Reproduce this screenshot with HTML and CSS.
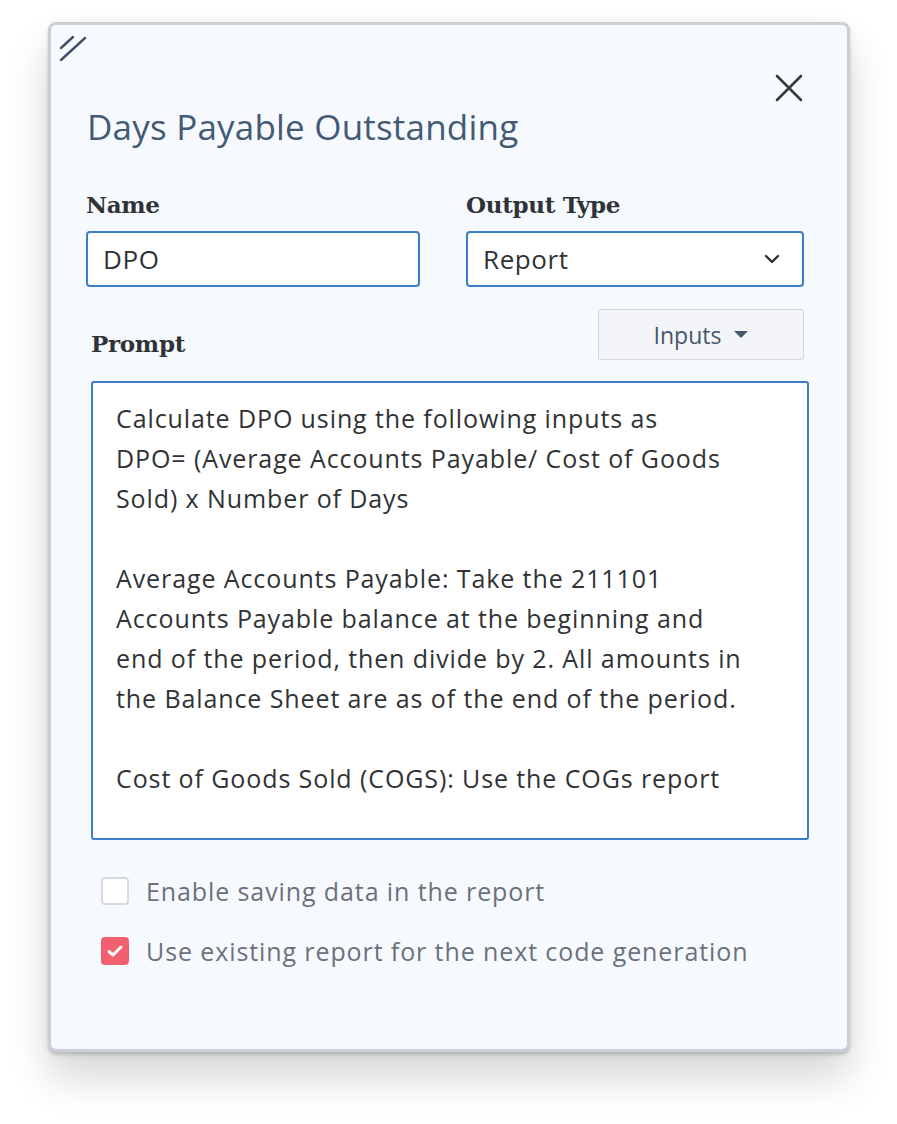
FILE: index.html
```html
<!DOCTYPE html>
<html lang="en">
<head>
    <meta charset="UTF-8">
    <meta name="viewport" content="width=device-width, initial-scale=1.0">
    <title>Days Payable Outstanding</title>
    <link rel="stylesheet" href="styles.css">
</head>
<body>
    <main class="modal">
        <svg class="resize-grip" width="28" height="26" viewBox="0 0 28 26">
            <path d="M2 13 L14 2 M2 25 L26 3" stroke="#3f5068" stroke-width="2.4" stroke-linecap="round" fill="none"/>
        </svg>
        <button class="close-btn" aria-label="Close">
            <svg width="28" height="28" viewBox="0 0 28 28">
                <path d="M2 2 L26 26 M26 2 L2 26" stroke="#333a40" stroke-width="2.6" stroke-linecap="round" fill="none"/>
            </svg>
        </button>

        <h1 class="title">Days Payable Outstanding</h1>

        <div class="field-row">
            <div class="field">
                <label class="field-label" for="name-input">Name</label>
                <div class="text-box" id="name-input">DPO</div>
            </div>
            <div class="field">
                <label class="field-label" for="output-select">Output Type</label>
                <div class="text-box select-box" id="output-select">
                    <span>Report</span>
                    <svg width="16" height="10" viewBox="0 0 16 10">
                        <path d="M2 2 L8 8 L14 2" stroke="#2b2f33" stroke-width="2.4" stroke-linecap="round" stroke-linejoin="round" fill="none"/>
                    </svg>
                </div>
            </div>
        </div>

        <section class="prompt">
            <div class="prompt-head">
                <label class="field-label">Prompt</label>
                <button class="inputs-btn">Inputs <span class="caret"></span></button>
            </div>
            <div class="prompt-box">
                <p>Calculate DPO using the following inputs as<br>DPO= (Average Accounts Payable/ Cost of Goods<br>Sold) x Number of Days</p>
                <p>Average Accounts Payable: Take the 211101<br>Accounts Payable balance at the beginning and<br>end of the period, then divide by 2. All amounts in<br>the Balance Sheet are as of the end of the period.</p>
                <p>Cost of Goods Sold (COGS): Use the COGs report</p>
            </div>
        </section>

        <div class="options">
            <label class="option">
                <span class="check"></span>
                Enable saving data in the report
            </label>
            <label class="option">
                <span class="check checked">
                    <svg width="18" height="14" viewBox="0 0 18 14">
                        <path d="M3 7.5 L7 11 L15 3" stroke="#ffffff" stroke-width="3" stroke-linecap="round" stroke-linejoin="round" fill="none"/>
                    </svg>
                </span>
                Use existing report for the next code generation
            </label>
        </div>
    </main>
</body>
</html>
```

FILE: styles.css
```css
body {
    margin: 0;
    padding: 22px 0 80px 48px;
    background-color: #ffffff;
    font-family: "Open Sans", Lato, sans-serif;
    color: #2f3337;
}

.modal {
    position: relative;
    box-sizing: border-box;
    width: 802px;
    height: 1030px;
    padding: 78px 43px 0 35px;
    background-color: #f6faff;
    border: 3px solid #c9cfd4;
    border-radius: 8px;
    box-shadow: 0 26px 40px rgba(0, 0, 0, 0.16), 0 3px 3px rgba(0, 0, 0, 0.14), 0 0 12px rgba(0, 0, 0, 0.05);
}

.resize-grip {
    position: absolute;
    top: 10px;
    left: 8px;
}

.close-btn {
    position: absolute;
    top: 49px;
    right: 44px;
    padding: 0;
    border: none;
    background: none;
    cursor: pointer;
}

.title {
    margin: 0 0 0 1px;
    font-size: 35px;
    font-weight: 400;
    line-height: 48px;
    letter-spacing: 0.2px;
    color: #445a74;
}

.field-row {
    display: grid;
    grid-template-columns: 334px 338px;
    column-gap: 46px;
    margin-top: 40px;
}

.field-label {
    display: block;
    font-family: "DejaVu Serif", serif;
    font-weight: bold;
    font-size: 23px;
    line-height: 28px;
    color: #2f3337;
    letter-spacing: -0.3px;
}

.field {
    display: flex;
    flex-direction: column;
    gap: 12px;
}

.text-box {
    box-sizing: border-box;
    height: 56px;
    display: flex;
    align-items: center;
    padding: 0 15px;
    background-color: #ffffff;
    border: 2px solid #3b7dc9;
    border-radius: 4px;
    font-size: 26px;
    letter-spacing: 0.6px;
    color: #2f3337;
}

.select-box {
    justify-content: space-between;
    padding-right: 22px;
}

.prompt {
    margin: 22px -5px 0 5px;
}

.prompt-head {
    display: flex;
    justify-content: space-between;
    align-items: center;
    padding-right: 5px;
}

.prompt-head .field-label {
    margin-top: 18px;
}

.inputs-btn {
    box-sizing: border-box;
    width: 206px;
    height: 51px;
    display: flex;
    justify-content: center;
    align-items: center;
    gap: 13px;
    background-color: #f4f5f8;
    border: 1.5px solid #d3d6dc;
    border-radius: 3px;
    font-family: "Open Sans", sans-serif;
    font-size: 23px;
    color: #45566d;
    cursor: pointer;
}

.caret {
    width: 0;
    height: 0;
    border-left: 7px solid transparent;
    border-right: 7px solid transparent;
    border-top: 7px solid #45566d;
}

.prompt-box {
    box-sizing: border-box;
    height: 459px;
    margin-top: 21px;
    padding: 15px 20px 0 23px;
    background-color: #ffffff;
    border: 2px solid #3b7dc9;
    border-radius: 3px;
    font-size: 25px;
    line-height: 40px;
    letter-spacing: 0.9px;
    white-space: nowrap;
    color: #2f3337;
}

.prompt-box p {
    margin: 0 0 40px;
}

.options {
    display: flex;
    flex-direction: column;
    gap: 32px;
    margin: 37px 0 0 15px;
}

.option {
    display: flex;
    align-items: center;
    gap: 17px;
    font-size: 25px;
    line-height: 28px;
    letter-spacing: 0.9px;
    color: #6b717a;
}

.check {
    box-sizing: border-box;
    width: 28px;
    height: 28px;
    display: flex;
    justify-content: center;
    align-items: center;
    background-color: #ffffff;
    border: 2px solid #d6d9de;
    border-radius: 4px;
}

.check.checked {
    background-color: #f2606f;
    border-color: #f2606f;
}
```
